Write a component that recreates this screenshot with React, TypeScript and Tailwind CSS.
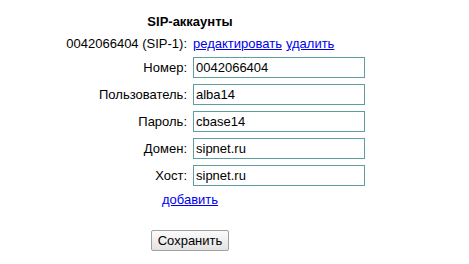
import React from "react";

const fields = [
  { label: "Номер:", value: "0042066404" },
  { label: "Пользователь:", value: "alba14" },
  { label: "Пароль:", value: "cbase14" },
  { label: "Домен:", value: "sipnet.ru" },
  { label: "Хост:", value: "sipnet.ru" },
];

const App = () => {
  return (
    <div
      className="w-[469px] h-[264px] bg-white text-[13px] text-black"
      style={{ fontFamily: '"Liberation Sans", Arial, sans-serif' }}
    >
      <div className="w-[380px] flex flex-col pt-[14px]">
        <h2 className="text-center font-bold text-[13px] leading-[16px]">SIP-аккаунты</h2>
        <div className="ml-[48px] mt-[6px] grid grid-cols-[139px_172px] gap-x-[6px] items-center">
          <div className="text-right leading-[15px] whitespace-nowrap">0042066404 (SIP-1):</div>
          <div className="leading-[15px] flex gap-[4px] whitespace-nowrap">
            <a href="#" className="text-[#0000ee] underline">редактировать</a>
            <a href="#" className="text-[#0000ee] underline">удалить</a>
          </div>
          {fields.map((f) => (
            <React.Fragment key={f.label}>
              <label className="text-right mt-[6px]">{f.label}</label>
              <input
                readOnly
                value={f.value}
                className="mt-[6px] h-[21px] w-[172px] border border-[#5f9ea0] px-[2px] text-[13px] outline-none"
                style={{ fontFamily: '"Liberation Sans", Arial, sans-serif' }}
              />
            </React.Fragment>
          ))}
        </div>
        <div className="text-center mt-[6px] leading-[16px]">
          <a href="#" className="text-[#0000ee] underline">добавить</a>
        </div>
        <div className="text-center mt-[22px]">
          <button className="h-[21px] px-[6px] border border-[#a0a0a0] rounded-[2px] bg-gradient-to-b from-[#fbfbfb] to-[#e3e3e3] text-[13px]">
            Сохранить
          </button>
        </div>
      </div>
    </div>
  );
};

export default App;
